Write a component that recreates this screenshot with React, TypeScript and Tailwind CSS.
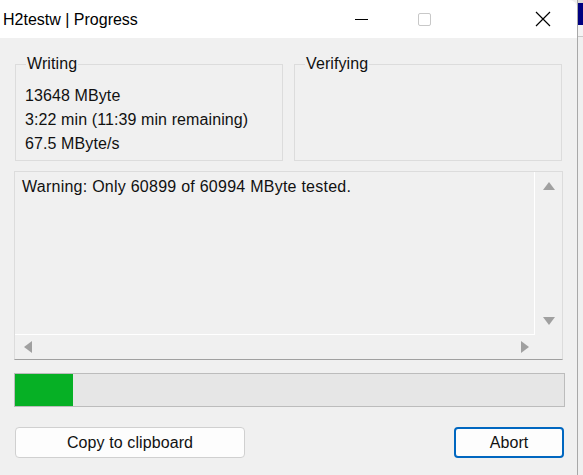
import React from "react";

const body = { fontFamily: '"Liberation Sans", Arial, sans-serif' };

function GroupBox({ label, children }: { label: string; children?: React.ReactNode }) {
  return (
    <div className="relative w-[268px] h-[97px] border border-[#dcdcdc]">
      <span className="absolute left-[10px] top-[-10px] bg-[#f0f0f0] px-[1px] text-[16px] leading-[18px] text-[#111]">
        {label}
      </span>
      {children}
    </div>
  );
}

export default function App() {
  return (
    <div className="w-[583px] h-[475px] flex bg-[#f0f0f0] overflow-hidden" style={body}>
      {/* window */}
      <div className="w-[577px] h-[475px] flex flex-col bg-[#f0f0f0] rounded-tr-[8px] overflow-hidden">
        {/* title bar */}
        <div className="h-[38px] bg-white flex items-center shrink-0">
          <span className="ml-[3px] mt-[2px] text-[16px] text-black">H2testw | Progress</span>
          <div className="flex-1" />
          <div className="w-[46px] h-[38px] flex items-center justify-center">
            <div className="w-[13px] h-[1px] bg-black" />
          </div>
          <div className="w-[46px] h-[38px] ml-[17px] flex items-center justify-center">
            <div className="w-[13px] h-[13px] border border-[#c8c8c8] rounded-[2px]" />
          </div>
          <div className="w-[46px] h-[38px] ml-[73px] mr-[11px] flex items-center justify-center">
            <svg width="16" height="16" viewBox="0 0 16 16">
              <path d="M1 1 L15 15 M15 1 L1 15" stroke="#000" strokeWidth="1.2" fill="none" />
            </svg>
          </div>
        </div>

        {/* body */}
        <div className="flex flex-col pl-[15px] pr-[14px] tracking-[0.1px]">
          <div className="flex gap-[11px] mt-[26px]">
            <GroupBox label="Writing">
              <div className="pl-[9px] pt-[19px] text-[16px] leading-[24px] text-[#111]">
                <div>13648 MByte</div>
                <div>3:22 min (11:39 min remaining)</div>
                <div>67.5 MByte/s</div>
              </div>
            </GroupBox>
            <GroupBox label="Verifying" />
          </div>

          {/* list box */}
          <div className="mt-[10px] ml-[-1px] w-[549px] h-[189px] border border-[#dcdcdc] border-b-[#a0a0a0] flex flex-col bg-[#f0f0f0]">
            <div className="flex flex-1 min-h-0">
              <div className="flex-1 border-r border-b border-white pl-[7px] pt-[5px] text-[16px] leading-[20px] tracking-[0.25px] text-[#111]">
                Warning: Only 60899 of 60994 MByte tested.
              </div>
              <div className="w-[27px] flex flex-col items-center justify-between pt-[10px] pb-[10px]">
                <svg width="12" height="8" viewBox="0 0 12 8">
                  <path d="M6 0 L12 8 L0 8 Z" fill="#a0a0a0" />
                </svg>
                <svg width="12" height="8" viewBox="0 0 12 8">
                  <path d="M0 0 L12 0 L6 8 Z" fill="#a0a0a0" />
                </svg>
              </div>
            </div>
            <div className="h-[24px] flex items-center shrink-0">
              <div className="w-[520px] flex items-center justify-between pl-[9px] pr-[6px]">
                <svg width="8" height="12" viewBox="0 0 8 12">
                  <path d="M8 0 L8 12 L0 6 Z" fill="#a0a0a0" />
                </svg>
                <svg width="8" height="12" viewBox="0 0 8 12">
                  <path d="M0 0 L8 6 L0 12 Z" fill="#a0a0a0" />
                </svg>
              </div>
            </div>
          </div>

          {/* progress */}
          <div className="mt-[13px] ml-[-1px] w-[551px] h-[34px] border border-[#bcbcbc] bg-[#e6e6e6] flex">
            <div className="w-[58px] h-full bg-[#06b025]" />
          </div>

          {/* buttons */}
          <div className="mt-[20px] flex justify-between w-[549px]">
            <button className="w-[230px] h-[31px] bg-[#fdfdfd] border border-[#d0d0d0] rounded-[4px] text-[16px] text-[#111]">
              Copy to clipboard
            </button>
            <button className="w-[110px] h-[31px] bg-[#fdfdfd] border-2 border-[#0067c0] rounded-[4px] text-[16px] text-[#111]">
              Abort
            </button>
          </div>
        </div>
      </div>

      {/* background behind window */}
      <div className="w-[6px] h-[475px] flex flex-col bg-[#f0f0f0] border-l border-[#a8a8a8]">
        <div className="h-[3px] bg-[#d8d8d8]" />
        <div className="h-[22px] bg-[#000080]" />
        <div className="h-[12px] bg-[#f4f4f4] border-b border-[#c8c8c8]" />
      </div>
    </div>
  );
}
